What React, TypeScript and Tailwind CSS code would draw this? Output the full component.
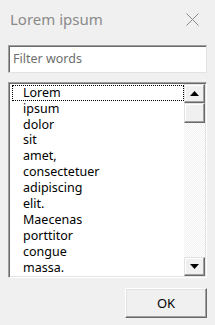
import React from "react";

const items = [
  "Lorem",
  "ipsum",
  "dolor",
  "sit",
  "amet,",
  "consectetuer",
  "adipiscing",
  "elit.",
  "Maecenas",
  "porttitor",
  "congue",
  "massa.",
];

function ScrollButton({ dir }: { dir: "up" | "down" }) {
  return (
    <div className="h-[19px] w-full bg-[#f0f0f0] border-t border-l border-t-[#e3e3e3] border-l-[#e3e3e3] border-r border-b border-r-[#696969] border-b-[#696969] shadow-[inset_-1px_-1px_0_#a0a0a0,inset_1px_1px_0_#ffffff] flex items-center justify-center">
      <svg width="9" height="5" viewBox="0 0 9 5">
        {dir === "up" ? (
          <polygon points="4.5,0 9,5 0,5" fill="#000" />
        ) : (
          <polygon points="0,0 9,0 4.5,5" fill="#000" />
        )}
      </svg>
    </div>
  );
}

export default function App() {
  return (
    <div
      className="w-[215px] h-[325px] bg-[#f0f0f0] flex flex-col overflow-hidden"
      style={{ fontFamily: '"Noto Sans", sans-serif' }}
    >
      <div className="h-[38px] flex items-center justify-between pl-[10px] pr-[16px] shrink-0">
        <span className="text-[15px] text-[#8a8a8a] leading-none">Lorem ipsum</span>
        <svg width="13" height="13" viewBox="0 0 13 13">
          <path d="M0.5 0.5 L12.5 12.5 M12.5 0.5 L0.5 12.5" stroke="#8a8a8a" strokeWidth="1" />
        </svg>
      </div>
      <div className="mx-[8px] mt-[7px] h-[28px] bg-white border-t border-l border-t-[#a0a0a0] border-l-[#a0a0a0] border-r border-b border-r-[#e3e3e3] border-b-[#e3e3e3] shadow-[inset_1px_1px_0_#696969] flex items-center pl-[4px] shrink-0">
        <span className="text-[12.5px] text-[#6d6d6d] leading-none">Filter words</span>
      </div>
      <div className="mx-[8px] mt-[9px] h-[196px] bg-white border-t border-l border-t-[#a0a0a0] border-l-[#a0a0a0] border-r border-b border-r-[#ffffff] border-b-[#ffffff] shadow-[inset_1px_1px_0_#696969,inset_-1px_-1px_0_#e3e3e3] flex pt-[1px] pl-[1px] pr-[1px] pb-[1px] shrink-0">
        <div className="flex-1 flex flex-col pt-[1px] pl-[2px]">
          {items.map((t, i) => (
            <div
              key={t}
              className={
                "h-[16px] flex items-center pl-[10px] text-[12.5px] text-black leading-none " +
                (i === 0 ? "border border-dotted border-black" : "border border-transparent")
              }
            >
              {t}
            </div>
          ))}
        </div>
        <div className="w-[21px] flex flex-col bg-[repeating-conic-gradient(#f0f0f0_0_25%,#ffffff_0_50%)] bg-[length:2px_2px]">
          <ScrollButton dir="up" />
          <div className="h-[20px] w-full bg-[#f0f0f0] border-t border-l border-t-[#e3e3e3] border-l-[#e3e3e3] border-r border-b border-r-[#696969] border-b-[#696969] shadow-[inset_-1px_-1px_0_#a0a0a0,inset_1px_1px_0_#ffffff]" />
          <div className="flex-1" />
          <ScrollButton dir="down" />
        </div>
      </div>
      <div className="flex justify-end mr-[8px] mt-[10px]">
        <div className="w-[82px] h-[30px] bg-[#f0f0f0] border-t border-l border-t-[#ffffff] border-l-[#ffffff] border-r border-b border-r-[#696969] border-b-[#696969] shadow-[inset_-1px_-1px_0_#a0a0a0,inset_1px_1px_0_#e3e3e3] flex items-center justify-center">
          <span className="text-[13px] text-black leading-none">OK</span>
        </div>
      </div>
    </div>
  );
}
